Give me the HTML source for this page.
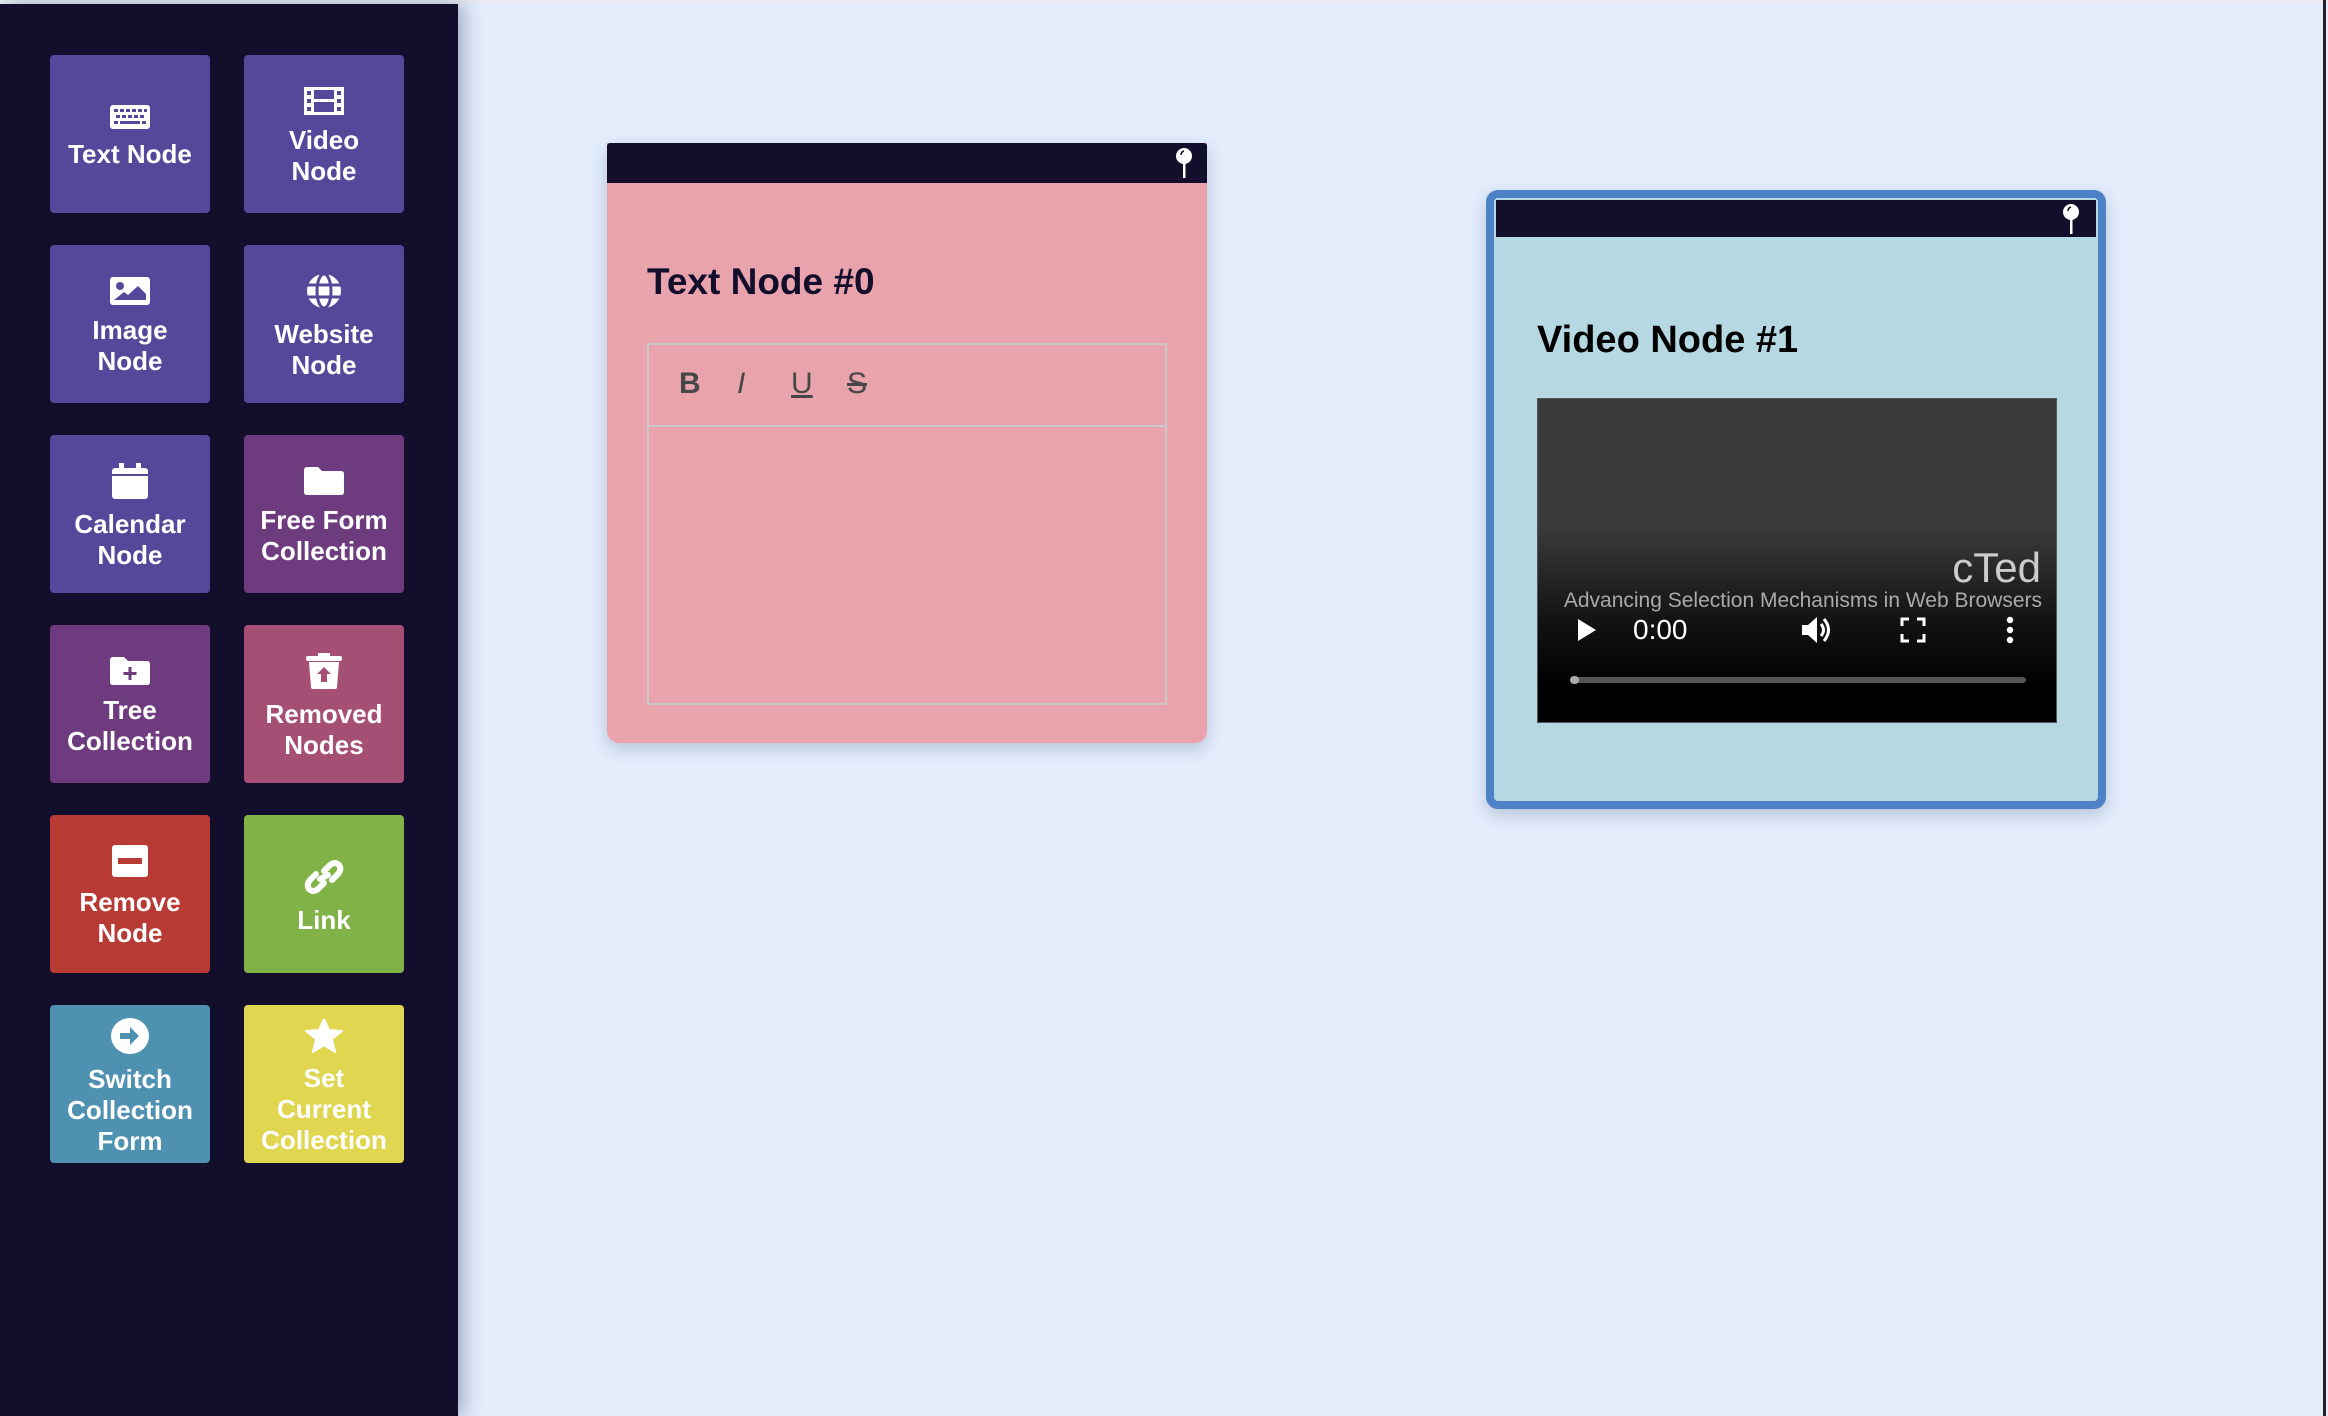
<!DOCTYPE html>
<html><head><meta charset="utf-8"><style>
*{box-sizing:border-box;margin:0;padding:0}
body{width:2328px;height:1416px;overflow:hidden;background:#e3edfc;font-family:"Liberation Sans",sans-serif;position:relative}
.top{position:absolute;left:0;top:0;width:2328px;height:4px;background:#e8ecf2}
.side{position:absolute;left:0;top:4px;width:458px;height:1412px;background:#120e2b;box-shadow:6px 0 18px rgba(40,50,90,.35)}
.btn{position:absolute;width:160px;height:158px;border-radius:4px;color:#fff;font-weight:bold;font-size:26px;line-height:31px;text-align:center;display:flex;flex-direction:column;align-items:center;justify-content:center;gap:10px;padding-top:6px}
.btn svg{display:block}
.pu{background:#54489a}.pl{background:#6e3b7e}.rs{background:#a64f74}.rd{background:#b73a34}.gr{background:#80b248}.bl{background:#4f91b0}.ye{background:#e0d650}
.rline{position:absolute;left:2323px;top:0;width:3px;height:1416px;background:#222}
.tn{position:absolute;left:607px;top:143px;width:600px;height:600px;background:#e8a3ac;border-radius:0 0 12px 12px;box-shadow:0 6px 16px rgba(60,70,110,.25)}
.hdr{position:absolute;left:0;top:0;right:0;height:40px;background:#120e2b;border-radius:3px 3px 0 0}
.pin{position:absolute;right:14px;top:4px}
.tn h2{position:absolute;left:40px;top:118px;font-size:37px;color:#120e2b;font-weight:bold}
.ed{position:absolute;left:40px;top:200px;width:520px;height:362px;border:2px solid #c9c9c9}
.tb{height:82px;border-bottom:2px solid #c9c9c9;position:relative;color:#474747;font-size:30px}
.tb span{position:absolute;top:22px}
.vn{position:absolute;left:1486px;top:190px;width:620px;height:619px;background:#b5d8e3;border:8px solid #4f81c7;border-radius:12px;box-shadow:0 6px 16px rgba(60,70,110,.25)}
.vn .hdr{left:2px;right:2px;top:2px;height:37px;border-radius:0}
.vn h2{position:absolute;left:43px;top:121px;font-size:38px;color:#000;font-weight:bold}
.vid{position:absolute;left:43px;top:200px;width:520px;height:325px;background:linear-gradient(#3a3a3a 0%,#3a3a3a 40%,#111 70%,#000 90%);border:1px solid #555}
</style></head><body>
<div class="top"></div>
<div class="side">
<div class="btn pu" style="left:50px;top:51px"><svg width="40" height="24" viewBox="0 0 40 24"><rect width="40" height="24" rx="3" fill="#fff"/><g fill="#54489a"><rect x="4" y="4" width="4" height="3"/><rect x="10" y="4" width="4" height="3"/><rect x="16" y="4" width="4" height="3"/><rect x="22" y="4" width="4" height="3"/><rect x="28" y="4" width="4" height="3"/><rect x="34" y="4" width="3" height="3"/><rect x="6" y="10" width="4" height="3"/><rect x="12" y="10" width="4" height="3"/><rect x="18" y="10" width="4" height="3"/><rect x="24" y="10" width="4" height="3"/><rect x="30" y="10" width="4" height="3"/><rect x="4" y="16" width="4" height="3"/><rect x="10" y="16" width="20" height="3"/><rect x="32" y="16" width="4" height="3"/></g></svg><div>Text Node</div></div>
<div class="btn pu" style="left:244px;top:51px"><svg width="40" height="28" viewBox="0 0 40 28"><rect width="40" height="28" fill="#fff"/><g fill="#54489a"><rect x="10" y="3" width="20" height="9"/><rect x="10" y="15" width="20" height="10"/><rect x="3" y="4" width="4" height="4"/><rect x="3" y="12" width="4" height="4"/><rect x="3" y="20" width="4" height="4"/><rect x="33" y="4" width="4" height="4"/><rect x="33" y="12" width="4" height="4"/><rect x="33" y="20" width="4" height="4"/></g></svg><div>Video<br>Node</div></div>
<div class="btn pu" style="left:50px;top:241px"><svg width="40" height="28" viewBox="0 0 40 28"><rect width="40" height="28" rx="3" fill="#fff"/><circle cx="10" cy="9" r="4" fill="#54489a"/><path d="M4 23 L14 15 L18 18 L28 9 L36 17 L36 23Z" fill="#54489a"/></svg><div>Image<br>Node</div></div>
<div class="btn pu" style="left:244px;top:241px"><svg width="38" height="36" viewBox="0 0 38 36"><circle cx="19" cy="18" r="17" fill="#fff"/><g stroke="#54489a" stroke-width="3" fill="none"><ellipse cx="19" cy="18" rx="7" ry="17"/><line x1="2" y1="12" x2="36" y2="12"/><line x1="2" y1="24" x2="36" y2="24"/></g></svg><div>Website<br>Node</div></div>
<div class="btn pu" style="left:50px;top:431px"><svg width="36" height="36" viewBox="0 0 36 36"><rect x="0" y="5" width="36" height="31" rx="3" fill="#fff"/><rect x="7" y="0" width="5" height="8" fill="#fff"/><rect x="24" y="0" width="5" height="8" fill="#fff"/><rect x="0" y="11" width="36" height="2" fill="#54489a"/></svg><div>Calendar<br>Node</div></div>
<div class="btn pl" style="left:244px;top:431px"><svg width="40" height="28" viewBox="0 0 40 28"><path d="M0 3 Q0 0 3 0 L14 0 L18 4 L37 4 Q40 4 40 7 L40 25 Q40 28 37 28 L3 28 Q0 28 0 25Z" fill="#fff"/></svg><div>Free Form<br>Collection</div></div>
<div class="btn pl" style="left:50px;top:621px"><svg width="40" height="28" viewBox="0 0 40 28"><path d="M0 3 Q0 0 3 0 L14 0 L18 4 L37 4 Q40 4 40 7 L40 25 Q40 28 37 28 L3 28 Q0 28 0 25Z" fill="#fff"/><path d="M20 10v13M13.5 16.5h13" stroke="#6e3b7e" stroke-width="3"/></svg><div>Tree<br>Collection</div></div>
<div class="btn rs" style="left:244px;top:621px"><svg width="36" height="36" viewBox="0 0 36 36"><rect x="0" y="3" width="36" height="5" rx="2" fill="#fff"/><rect x="12" y="0" width="12" height="4" fill="#fff"/><path d="M3 9 L33 9 L31 34 Q31 36 29 36 L7 36 Q5 36 5 34Z" fill="#fff"/><path d="M18 14 L25 21 L21 21 L21 29 L15 29 L15 21 L11 21Z" fill="#a64f74"/></svg><div>Removed<br>Nodes</div></div>
<div class="btn rd" style="left:50px;top:811px"><svg width="36" height="32" viewBox="0 0 36 32"><rect width="36" height="32" rx="3" fill="#fff"/><rect x="6" y="13" width="24" height="6" fill="#b73a34"/></svg><div>Remove<br>Node</div></div>
<div class="btn gr" style="left:244px;top:811px"><svg width="40" height="36" viewBox="0 0 40 36"><g stroke="#fff" stroke-width="6" fill="none" stroke-linecap="round"><path d="M20 12 L26 6 Q31 2 35 6 Q38 10 34 15 L28 21"/><path d="M20 24 L14 30 Q9 34 5 30 Q2 26 6 21 L12 15"/><path d="M16 20 L24 16"/></g></svg><div>Link</div></div>
<div class="btn bl" style="left:50px;top:1001px"><svg width="38" height="36" viewBox="0 0 38 36"><ellipse cx="19" cy="18" rx="19" ry="18" fill="#fff"/><path d="M9 15 L19 15 L19 9 L28 18 L19 27 L19 21 L9 21Z" fill="#4f91b0"/></svg><div>Switch<br>Collection<br>Form</div></div>
<div class="btn ye" style="left:244px;top:1001px"><svg width="38" height="34" viewBox="0 0 38 34"><path d="M19 0 L24 11 L37 12 L27 20 L30 33 L19 26 L8 33 L11 20 L1 12 L14 11Z" fill="#fff" stroke="#fff" stroke-width="2" stroke-linejoin="round"/></svg><div>Set<br>Current<br>Collection</div></div>
</div>
<div class="rline"></div>

<div class="tn"><div class="hdr"><svg class="pin" width="18" height="32" viewBox="0 0 18 32"><circle cx="9" cy="9" r="8" fill="#fff"/><rect x="8" y="14" width="2.5" height="17" fill="#fff"/><path d="M6 8 Q6 5 9 4" stroke="#120e2b" stroke-width="1.5" fill="none"/></svg></div>
<h2>Text Node #0</h2>
<div class="ed"><div class="tb">
<span style="left:30px;font-weight:bold">B</span>
<span style="left:88px;font-style:italic">I</span>
<span style="left:142px;text-decoration:underline">U</span>
<span style="left:198px;text-decoration:line-through">S</span>
</div></div></div>

<div class="vn"><div class="hdr"><svg class="pin" style="right:16px;top:3px" width="18" height="32" viewBox="0 0 18 32"><circle cx="9" cy="9" r="8" fill="#fff"/><rect x="8" y="14" width="2.5" height="17" fill="#fff"/><path d="M6 8 Q6 5 9 4" stroke="#120e2b" stroke-width="1.5" fill="none"/></svg></div>
<h2>Video Node #1</h2>
<div class="vid">
<div style="position:absolute;right:15px;top:145px;color:#ccc;font-size:42px">cTed</div>
<div style="position:absolute;right:14px;top:190px;color:#aaa;font-size:21px">Advancing Selection Mechanisms in Web Browsers</div>
<svg style="position:absolute;left:38px;top:218px" width="22" height="26"><path d="M2 2 L20 13 L2 24Z" fill="#fff"/></svg>
<div style="position:absolute;left:95px;top:215px;color:#fff;font-size:28px">0:00</div>
<svg style="position:absolute;left:262px;top:216px" width="34" height="30" viewBox="0 0 34 30"><path d="M2 10 L8 10 L17 2 L17 28 L8 20 L2 20Z" fill="#fff"/><path d="M21 9 Q26 15 21 21" stroke="#fff" stroke-width="3" fill="none"/><path d="M24 4 Q33 15 24 26" stroke="#fff" stroke-width="3" fill="none"/></svg>
<svg style="position:absolute;left:362px;top:218px" width="26" height="26" viewBox="0 0 26 26"><path d="M2 9V2h7M17 2h7v7M24 17v7h-7M9 24H2v-7" stroke="#fff" stroke-width="3" fill="none"/></svg>
<svg style="position:absolute;left:468px;top:217px" width="8" height="28"><circle cx="4" cy="4" r="3.2" fill="#fff"/><circle cx="4" cy="14" r="3.2" fill="#fff"/><circle cx="4" cy="24" r="3.2" fill="#fff"/></svg>
<div style="position:absolute;left:32px;top:278px;width:456px;height:6px;border-radius:3px;background:#555"></div>
<div style="position:absolute;left:32px;top:277px;width:9px;height:8px;border-radius:4px;background:#aaa"></div>
</div></div>
</body></html>
